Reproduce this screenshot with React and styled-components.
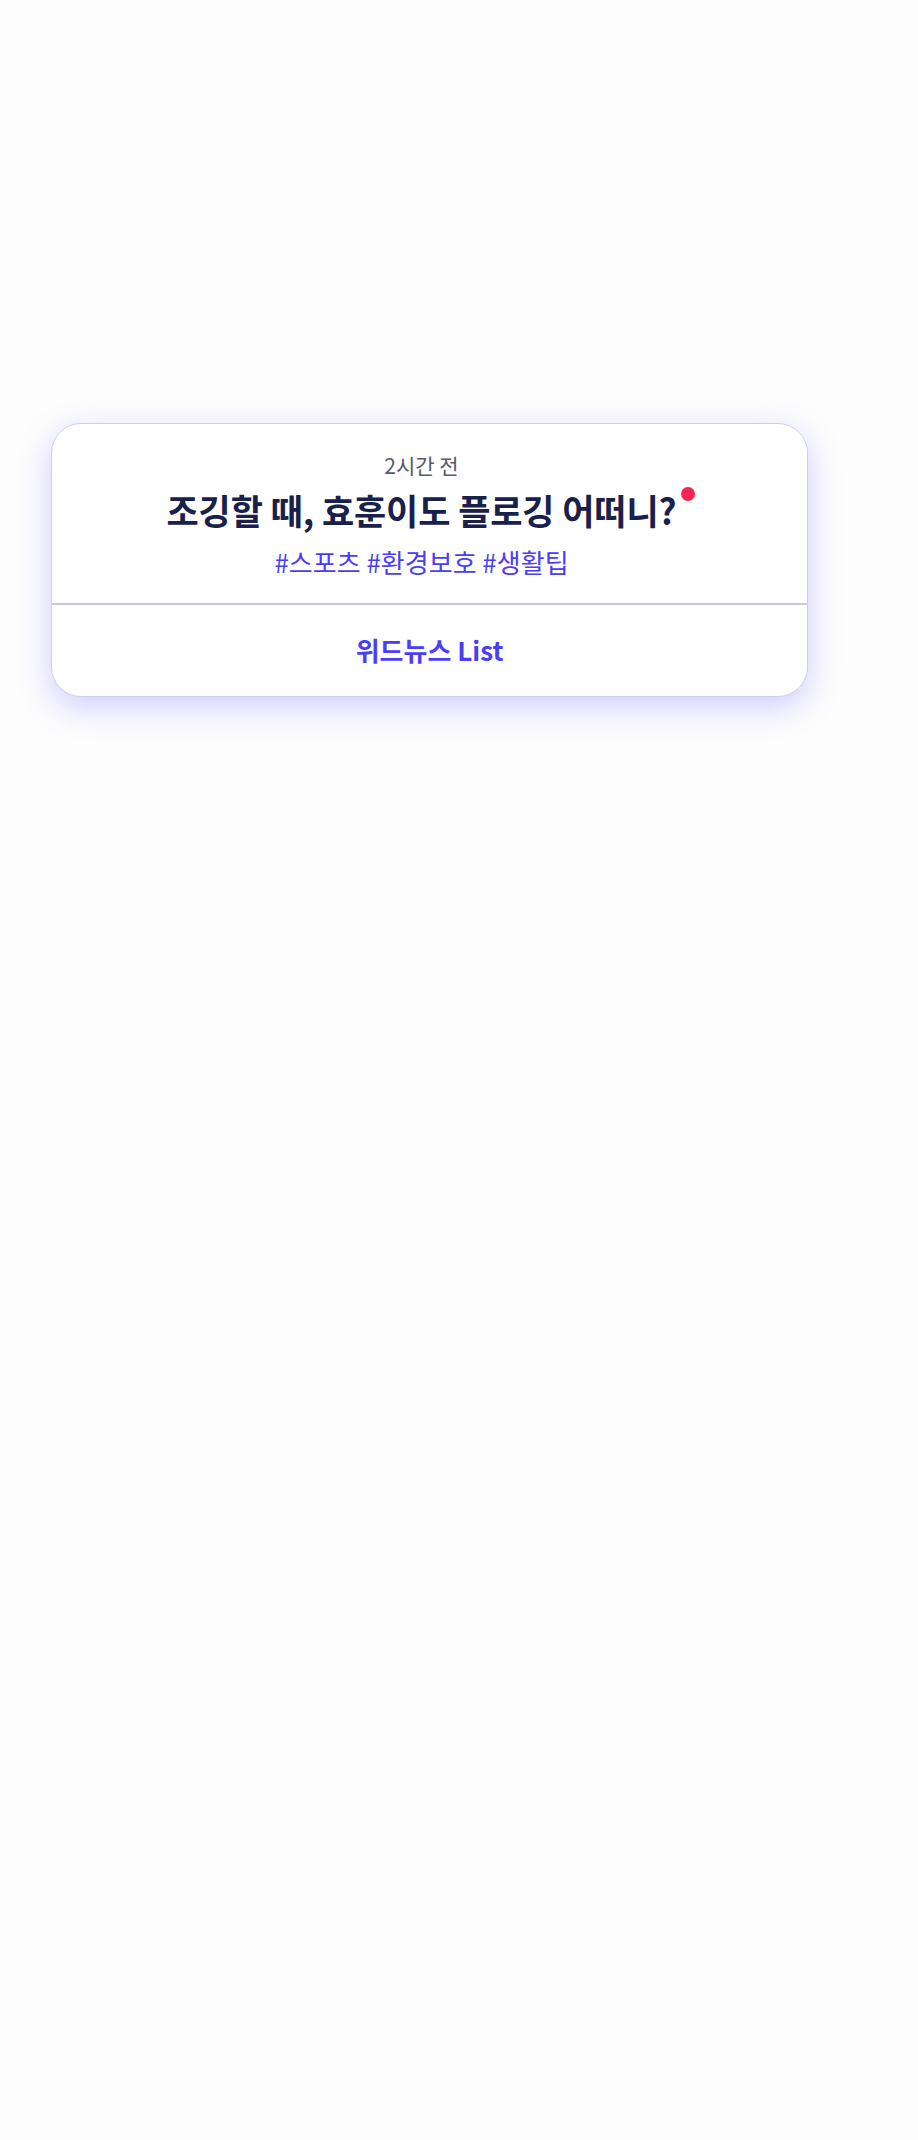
import React from 'react';
import styled, { createGlobalStyle } from 'styled-components';

const GlobalStyle = createGlobalStyle`
  html, body {
    margin: 0;
    padding: 0;
    background: #fdfdfd;
  }
  body {
    font-family: 'Noto Sans CJK KR', 'Noto Sans', sans-serif;
  }
`;

const Page = styled.div`
  min-height: 2140px;
  padding: 423px 0 0 51px;
  box-sizing: border-box;
`;

const Card = styled.section`
  width: 757px;
  box-sizing: border-box;
  background: #ffffff;
  border: 1.5px solid #c8d1f1;
  border-radius: 30px;
  box-shadow: 0 10px 32px rgba(92, 80, 255, 0.28);
  overflow: hidden;
`;

const Head = styled.div`
  display: flex;
  flex-direction: column;
  align-items: center;
  padding: 29px 40px 24px 24px;
  border-bottom: 2px solid #c7c6e6;
`;

const Time = styled.div`
  font-size: 21px;
  line-height: 24px;
  color: #555a66;
`;

const Title = styled.h2`
  position: relative;
  margin: 10px 0 0;
  font-size: 35px;
  line-height: 46px;
  font-weight: 700;
  color: #19204a;
  letter-spacing: -0.1px;
`;

const Dot = styled.span`
  position: absolute;
  top: 0;
  right: -19px;
  width: 14px;
  height: 14px;
  border-radius: 50%;
  background: #fa2452;
`;

const Tags = styled.div`
  margin-top: 12px;
  font-size: 26px;
  line-height: 34px;
  color: #4a3df6;
`;

const Footer = styled.a`
  display: flex;
  justify-content: center;
  align-items: center;
  box-sizing: border-box;
  height: 91px;
  padding-bottom: 3px;
  font-size: 26px;
  font-weight: 700;
  color: #4a3df6;
  text-decoration: none;
`;

export default function App() {
  return (
    <>
      <GlobalStyle />
      <Page>
        <Card>
          <Head>
            <Time>2시간 전</Time>
            <Title>
              조깅할 때, 효훈이도 플로깅 어떠니?
              <Dot />
            </Title>
            <Tags>#스포츠 #환경보호 #생활팁</Tags>
          </Head>
          <Footer href="#">위드뉴스 List</Footer>
        </Card>
      </Page>
    </>
  );
}
